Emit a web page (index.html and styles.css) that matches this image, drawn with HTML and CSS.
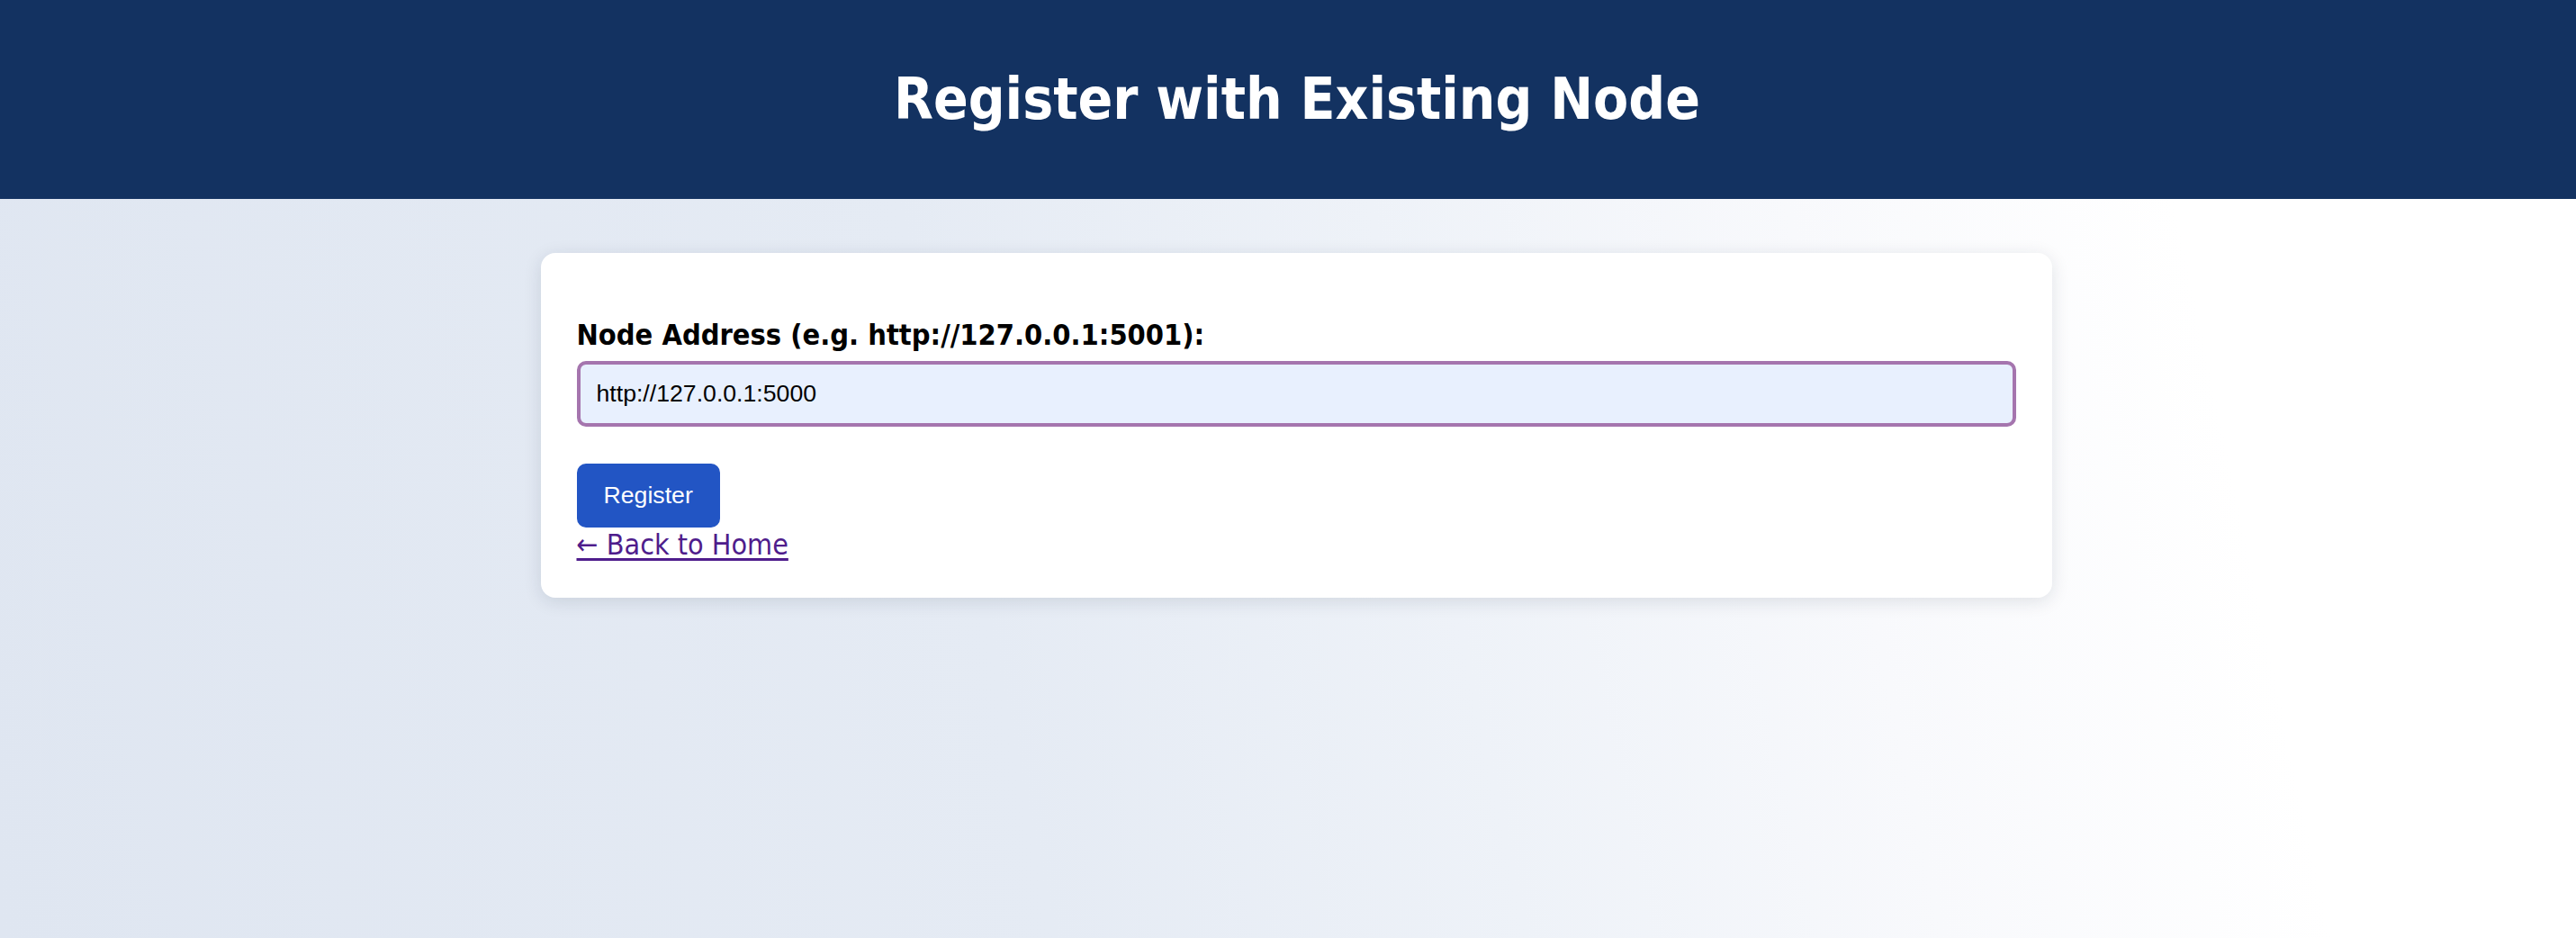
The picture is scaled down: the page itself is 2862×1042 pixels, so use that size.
FILE: index.html
```html
<!DOCTYPE html>
<html lang="en">
<head>
<meta charset="utf-8">
<title>Register with Existing Node</title>
<link rel="stylesheet" href="styles.css">
</head>
<body>
<header class="site-header">
  <h1 class="page-title">Register with Existing Node</h1>
</header>
<main class="page">
  <section class="card">
    <form class="register-form">
      <label class="field-label" for="node">Node Address (e.g. http://127.0.0.1:5001):</label>
      <input class="field-input" id="node" type="text" value="http://127.0.0.1:5000">
      <button class="btn-primary" type="button">Register</button>
    </form>
    <a class="back-link" href="#">← Back to Home</a>
  </section>
</main>
</body>
</html>
```

FILE: styles.css
```css
html, body {
  margin: 0;
  padding: 0;
}

body {
  min-height: 1042px;
  font-family: "DejaVu Sans Condensed", "DejaVu Sans", sans-serif;
  font-size: 32px;
  color: #000;
  background: linear-gradient(78deg, #dfe6f1 0%, #e5ebf4 38%, #eef2f8 55%, #f8f9fc 70%, #ffffff 84%);
}

.site-header {
  background: #133261;
  padding: 72px 0 73px 20px;
  text-align: center;
}

.page-title {
  margin: 0;
  font-size: 63.5px;
  line-height: 76px;
  font-weight: 700;
  color: #ffffff;
}

.page {
  padding-left: 18px;
  display: flex;
  justify-content: center;
}

.card {
  margin-top: 60px;
  width: 1679px;
  box-sizing: border-box;
  padding: 40px;
  background: #ffffff;
  border-radius: 16px;
  box-shadow: 0 4px 20px rgba(20, 30, 60, 0.12);
}

.register-form {
  margin: 0;
}

.field-label {
  display: block;
  margin-top: 32px;
  margin-bottom: 10px;
  font-weight: 700;
  font-size: 32.3px;
  line-height: 38px;
}

.field-input {
  display: block;
  box-sizing: border-box;
  width: 100%;
  height: 73px;
  margin: 0;
  padding: 0 18px;
  border: 4px solid #a575ae;
  border-radius: 10px;
  background: #e8f0fe;
  font-family: "Liberation Sans", Arial, sans-serif;
  font-size: 26.67px;
  color: #000;
  outline: none;
}

.btn-primary {
  display: block;
  margin-top: 41px;
  padding: 20px 30px;
  border: none;
  border-radius: 10px;
  background: #2255c4;
  color: #ffffff;
  font-family: "Liberation Sans", Arial, sans-serif;
  font-size: 26.67px;
  line-height: 31px;
}

.back-link {
  display: inline-block;
  color: #4f1d8c;
  text-decoration: underline;
  text-decoration-thickness: 3px;
  text-underline-offset: 4px;
  font-size: 32px;
}
```
